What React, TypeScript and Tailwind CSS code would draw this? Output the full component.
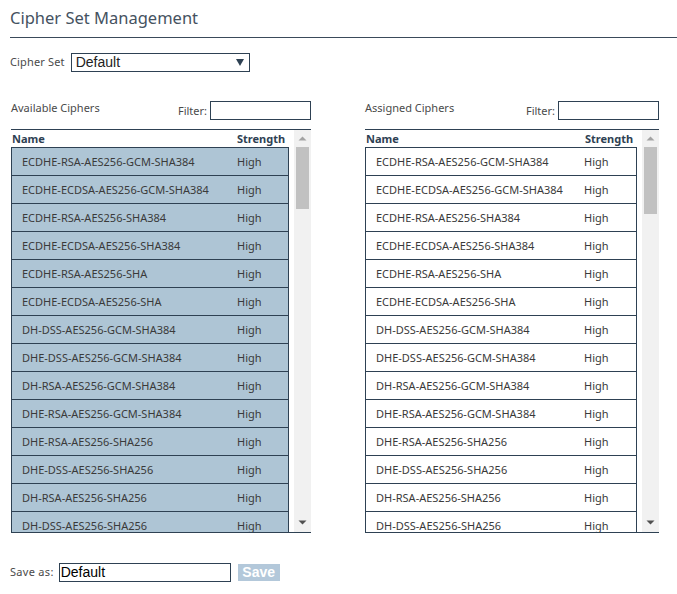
import React from "react";

const ciphers = [
  "ECDHE-RSA-AES256-GCM-SHA384",
  "ECDHE-ECDSA-AES256-GCM-SHA384",
  "ECDHE-RSA-AES256-SHA384",
  "ECDHE-ECDSA-AES256-SHA384",
  "ECDHE-RSA-AES256-SHA",
  "ECDHE-ECDSA-AES256-SHA",
  "DH-DSS-AES256-GCM-SHA384",
  "DHE-DSS-AES256-GCM-SHA384",
  "DH-RSA-AES256-GCM-SHA384",
  "DHE-RSA-AES256-GCM-SHA384",
  "DHE-RSA-AES256-SHA256",
  "DHE-DSS-AES256-SHA256",
  "DH-RSA-AES256-SHA256",
  "DH-DSS-AES256-SHA256",
];

function Scrollbar({ thumbClass }: { thumbClass: string }) {
  return (
    <div className="relative w-[17px] shrink-0 bg-[#f1f1f1]">
      <svg className="absolute left-[4px] top-[6px]" width="9" height="5" viewBox="0 0 9 5">
        <path d="M0.5 4.5 L4.5 0.5 L8.5 4.5 Z" fill="#a3a3a3" />
      </svg>
      <div className={`absolute left-[2px] w-[13px] bg-[#c1c1c1] ${thumbClass}`} />
      <svg className="absolute left-[4px] bottom-[7px]" width="9" height="5" viewBox="0 0 9 5">
        <path d="M0.5 0.5 L4.5 4.5 L8.5 0.5 Z" fill="#505050" />
      </svg>
    </div>
  );
}

function CipherPanel({
  title,
  assigned,
}: {
  title: string;
  assigned?: boolean;
}) {
  const panelW = assigned ? "w-[294px]" : "w-[300px]";
  const rowW = assigned ? "w-[272px]" : "w-[278px]";
  const nameW = assigned ? "w-[208px]" : "w-[215px]";
  const headNameW = assigned ? "w-[219px]" : "w-[225px]";
  const rowBg = assigned ? "bg-white" : "bg-[#aec5d5]";

  return (
    <div className={`flex flex-col ${panelW}`}>
      <div className="flex h-[28px] items-start justify-between">
        <span className="text-[11px] leading-[14px] text-[#4a4a4a]">{title}</span>
        <label className="flex items-start gap-[3px]">
          <span className="pt-[3px] text-[11px] leading-[14px] text-[#4a4a4a]">Filter:</span>
          <input className="h-[19px] w-[101px] border border-[#2e4153] bg-white px-[2px] text-[13px] outline-none" />
        </label>
      </div>
      <div className="flex h-[404px] overflow-hidden border-y border-[#2e4153]">
        <div className="flex-1 overflow-hidden">
          <div className="flex h-[17px] items-center pl-[1px] pt-[1px] text-[11px] font-bold text-[#2e4153]">
            <span className={headNameW}>Name</span>
            <span>Strength</span>
          </div>
          {ciphers.map((c) => (
            <div
              key={c}
              className={`flex h-[28px] shrink-0 items-center border-x border-t border-[#2e4153] pl-[10px] pt-[2px] text-[11px] text-[#3a3a3a] ${rowW} ${rowBg}`}
            >
              <span className={`${nameW} whitespace-nowrap`}>{c}</span>
              <span>High</span>
            </div>
          ))}
        </div>
        <Scrollbar thumbClass={assigned ? "top-[17px] h-[67px]" : "top-[17px] h-[62px]"} />
      </div>
    </div>
  );
}

export default function App() {
  return (
    <div className="min-h-[594px] w-[677px] bg-white pl-[10px] font-['Noto_Sans',sans-serif]">
      <div className="flex h-[38px] items-center border-b border-[#3a4a5a]">
        <h1 className="text-[16.5px] font-normal text-[#45525f]">Cipher Set Management</h1>
      </div>

      <div className="mt-[15px] flex items-center gap-[6px]">
        <span className="text-[11px] tracking-[0.15px] text-[#4a4a4a]">Cipher Set</span>
        <div className="relative flex h-[19px] w-[179px] items-center border border-[#2e4153] pl-[4px] font-['Liberation_Sans',Arial,sans-serif] text-[14px] text-[#222]">
          Default
          <svg className="absolute right-[5px] top-[5px]" width="8" height="7" viewBox="0 0 8 7">
            <path d="M0 0 L8 0 L4 7 Z" fill="#2e4153" />
          </svg>
        </div>
      </div>

      <div className="mt-[29px] flex gap-[54px] pl-[1px]">
        <CipherPanel title="Available Ciphers" />
        <CipherPanel title="Assigned Ciphers" assigned />
      </div>

      <div className="mt-[30px] flex items-center">
        <span className="mr-[5px] text-[11px] tracking-[0.3px] text-[#4a4a4a]">Save as:</span>
        <input
          defaultValue="Default"
          className="h-[19px] w-[172px] border border-[#2e4153] px-[1px] font-['Liberation_Sans',Arial,sans-serif] text-[14px] text-black outline-none"
        />
        <button className="ml-[7px] h-[17px] w-[42px] bg-[#b3c8da] font-['Liberation_Sans',Arial,sans-serif] text-[14px] font-bold leading-[17px] text-white">
          Save
        </button>
      </div>
    </div>
  );
}
